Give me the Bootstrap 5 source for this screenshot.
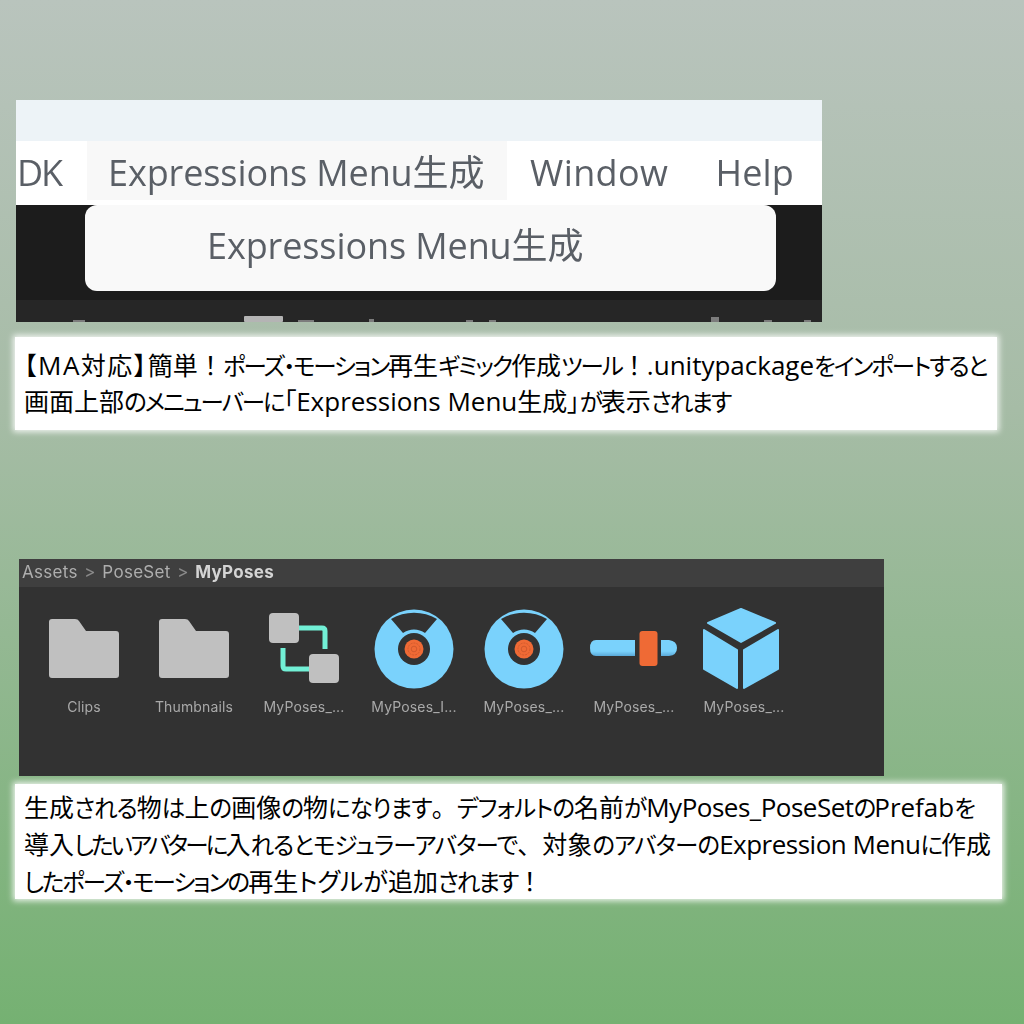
<!DOCTYPE html>
<html lang="ja">
<head>
    <meta charset="UTF-8">
    <title>Expressions Menu</title>
    <link href="https://cdn.jsdelivr.net/npm/bootstrap@5.3.2/dist/css/bootstrap.min.css" rel="stylesheet">
    <style>
    html, body { height: 1024px; overflow: hidden; }
    body {
        background: linear-gradient(180deg, #b9c4bd 0%, #a6bca6 40%, #75b172 100%);
        padding-top: 100px;
        font-family: "Open Sans", "Noto Sans CJK JP", sans-serif;
    }
    /* menu screenshot */
    .shot-menu { width: 806px; height: 222px; margin-left: 16px; background: #1c1c1c; position: relative; filter: blur(.5px); }
    .menu-top { height: 41px; background: #edf3f7; }
    .menu-bar { height: 64px; background: #fff; font-size: 36px; color: #5a5f66; line-height: 64px; font-feature-settings: "palt"; letter-spacing: -.1px; }
    .menu-dk { width: 71px; padding-left: 1px; overflow: hidden; letter-spacing: -2px; }
    .menu-active { width: 420px; height: 59px; background: #f8f8f8; padding-left: 21px; white-space: nowrap; }
    .menu-win { margin-left: 23px; letter-spacing: .4px; }
    .menu-help { margin-left: 47px; letter-spacing: .2px; }
    .menu-drop { position: absolute; left: 69px; top: 105px; width: 691px; height: 86px; background: #f9f9f9; border-radius: 12px; font-size: 36px; color: #5a5f66; line-height: 82px; padding-left: 122px; font-feature-settings: "palt"; letter-spacing: -.1px; }
    .menu-foot { position: absolute; left: 0; right: 0; bottom: 0; height: 22px; background: #262626; }
    .menu-foot svg { display: block; }
    /* captions */
    .cap-box { background: #fff; color: #000; box-shadow: 0 0 6px 2px rgba(255,255,255,.85); font-size: 25px; white-space: nowrap; font-feature-settings: "palt"; }
    .cap-kana { font-size: 23.5px; letter-spacing: -2px; }
    .cap-snug { font-size: 23.5px; letter-spacing: -2.8px; }
    .cap-hira { font-size: 23.5px; letter-spacing: -.9px; }
    .cap-wide { letter-spacing: 0; }
    .cap-full { font-feature-settings: normal; }
    .cap-lead { letter-spacing: 1.5px; }
    .cap-lat { font-size: 26px; }
    .cap-tight { letter-spacing: -.5px; }
    .cap-one { width: 982px; height: 93px; margin: 15px 0 0 15px; padding: 11px 0 0 9px; line-height: 35px; }
    .cap-two { width: 987px; height: 115px; margin: 8px 0 0 15px; padding: 5px 0 0 9px; line-height: 36px; }
    /* project window */
    .shot-assets { width: 865px; height: 217px; margin: 129px 0 0 19px; background: #323232; font-family: Inter, "Liberation Sans", sans-serif; filter: blur(.4px); }
    .crumb-bar { height: 28px; background: #3f3f3f; padding-left: 3px; font-size: 17px; line-height: 26px; letter-spacing: .3px; color: #aeaeae; }
    .crumb-sep { margin: 0 6.5px; color: #8a8a8a; }
    .crumb-now { color: #d4d4d4; font-weight: 700; }
    .asset-list { padding: 19px 0 0 10px; }
    .asset-item { width: 110px; text-align: center; font-size: 14px; line-height: 20px; letter-spacing: .15px; color: #a9a9a9; }
    .asset-item svg { display: block; margin: 0 auto 5px; }
    </style>
</head>
<body>

<div class="shot-menu">
    <div class="menu-top"></div>
    <div class="menu-bar d-flex">
        <div class="menu-dk">DK</div>
        <div class="menu-active">Expressions Menu生成</div>
        <div class="menu-win">Window</div>
        <div class="menu-help">Help</div>
    </div>
    <div class="menu-foot">
        <svg width="806" height="22" viewBox="0 0 806 22">
            <rect x="228" y="16" width="39" height="6" rx="1" fill="#b4b4b4"/>
            <g fill="#7c7c7c">
                <rect x="57" y="20" width="12" height="2"/><rect x="282" y="20" width="16" height="2"/><rect x="353" y="19" width="5" height="3"/>
                <rect x="450" y="20" width="7" height="2"/><rect x="473" y="20" width="7" height="2"/><rect x="695" y="17" width="8" height="5"/>
                <rect x="748" y="20" width="8" height="2"/><rect x="788" y="20" width="7" height="2"/>
            </g>
        </svg>
    </div>
    <div class="menu-drop">Expressions Menu生成</div>
</div>

<div class="cap-box cap-one"><span class="cap-lead">【<span class="cap-lat">MA</span>対応】</span>簡単<span class="cap-full">！</span><span class="cap-kana">ポーズ・モーション</span>再生<span class="cap-kana">ギミック</span>作成<span class="cap-kana">ツール</span><span class="cap-full">！</span><span class="cap-lat">.unitypackage</span><span class="cap-kana">をインポートすると</span><br>画面上部<span class="cap-kana">のメニューバーに</span>「<span class="cap-lat">Expressions Menu</span>生成」<span class="cap-kana">が</span>表示<span class="cap-kana">されます</span></div>

<div class="shot-assets">
    <div class="crumb-bar">Assets<span class="crumb-sep">&gt;</span>PoseSet<span class="crumb-sep">&gt;</span><span class="crumb-now">MyPoses</span></div>
    <div class="asset-list d-flex">
        <div class="asset-item">
            <svg width="90" height="86" viewBox="0 0 90 86"><path fill="#c0c0c0" d="M13 13H36Q39 13 40 15L47 25H77Q80 25 80 28V69Q80 72 77 72H13Q10 72 10 69V16Q10 13 13 13Z"/></svg>
            Clips
        </div>
        <div class="asset-item">
            <svg width="90" height="86" viewBox="0 0 90 86"><path fill="#c0c0c0" d="M13 13H36Q39 13 40 15L47 25H77Q80 25 80 28V69Q80 72 77 72H13Q10 72 10 69V16Q10 13 13 13Z"/></svg>
            Thumbnails
        </div>
        <div class="asset-item">
            <svg width="90" height="86" viewBox="0 0 90 86">
                <path fill="none" stroke="#72f0d6" stroke-width="5" d="M40 22H63Q66 22 66 25V43M24 42V60Q24 63 27 63H50"/>
                <rect x="10" y="7" width="30" height="30" rx="4" fill="#c0c0c0"/>
                <rect x="50" y="48" width="30" height="29" rx="4" fill="#c0c0c0"/>
            </svg>
            MyPoses_...
        </div>
        <div class="asset-item">
            <svg width="90" height="86" viewBox="0 0 90 86">
                <circle cx="45" cy="43" r="39.5" fill="#7ad2fc"/>
                <path fill="#323232" d="M22 13A45 45 0 0 1 68 13L56 27A19 19 0 0 0 34 27Z"/>
                <circle cx="45" cy="43" r="16" fill="#323232"/>
                <circle cx="45" cy="43" r="9.5" fill="#ef6a35"/>
                <circle cx="45" cy="43" r="6" fill="none" stroke="#c9562c" stroke-width=".8" stroke-dasharray="2 1"/>
                <circle cx="45" cy="43" r="2.8" fill="none" stroke="#c9562c" stroke-width=".8"/>
            </svg>
            MyPoses_I...
        </div>
        <div class="asset-item">
            <svg width="90" height="86" viewBox="0 0 90 86">
                <circle cx="45" cy="43" r="39.5" fill="#7ad2fc"/>
                <path fill="#323232" d="M22 13A45 45 0 0 1 68 13L56 27A19 19 0 0 0 34 27Z"/>
                <circle cx="45" cy="43" r="16" fill="#323232"/>
                <circle cx="45" cy="43" r="9.5" fill="#ef6a35"/>
                <circle cx="45" cy="43" r="6" fill="none" stroke="#c9562c" stroke-width=".8" stroke-dasharray="2 1"/>
                <circle cx="45" cy="43" r="2.8" fill="none" stroke="#c9562c" stroke-width=".8"/>
            </svg>
            MyPoses_...
        </div>
        <div class="asset-item">
            <svg width="90" height="86" viewBox="0 0 90 86">
                <defs><linearGradient id="barShade" x1="0" y1="0" x2="0" y2="1"><stop offset=".7" stop-color="#7ad2fc"/><stop offset="1" stop-color="#5aa9d8"/></linearGradient></defs>
                <path fill="url(#barShade)" d="M7 34H46V50H7Q1 50 1 42T7 34Z"/>
                <path fill="url(#barShade)" d="M72 34H80Q88 35 88 42T80 50H72Z"/>
                <rect x="50.5" y="25" width="18" height="35" rx="3" fill="#ef6a35"/>
            </svg>
            MyPoses_...
        </div>
        <div class="asset-item">
            <svg width="90" height="86" viewBox="0 0 90 86">
                <path fill="#7ad2fc" stroke="#7ad2fc" stroke-width="2" stroke-linejoin="round" d="M42 3L76 17L42 36L9 17Z"/>
                <path fill="#7ad2fc" stroke="#7ad2fc" stroke-width="2" stroke-linejoin="round" d="M5 24L38 44V82L5 63Z"/>
                <path fill="#7ad2fc" stroke="#7ad2fc" stroke-width="2" stroke-linejoin="round" d="M79 24L45 44V82L79 63Z"/>
            </svg>
            MyPoses_...
        </div>
    </div>
</div>

<div class="cap-box cap-two">生成<span class="cap-hira">される</span>物<span class="cap-hira">は</span>上<span class="cap-hira">の</span>画像<span class="cap-hira">の</span>物<span class="cap-hira">になります</span><span class="cap-full">。</span><span class="cap-hira">デフォルトの</span>名前<span class="cap-hira">が</span><span class="cap-lat cap-tight">MyPoses_PoseSet</span><span class="cap-kana">の</span><span class="cap-lat">Prefab</span><span class="cap-kana">を</span><br>導入<span class="cap-snug">したいアバターに</span>入<span class="cap-hira">れるとモジュラーアバターで</span><span class="cap-full">、</span>対象<span class="cap-hira">のアバターの</span><span class="cap-lat cap-tight">Expression Menu</span><span class="cap-kana">に</span>作成<br><span class="cap-kana">したポーズ・モーションの</span>再生<span class="cap-wide">トグルが</span>追加<span class="cap-kana">されます</span><span class="cap-full">！</span></div>

<script src="https://cdn.jsdelivr.net/npm/bootstrap@5.3.2/dist/js/bootstrap.bundle.min.js"></script>
</body>
</html>
